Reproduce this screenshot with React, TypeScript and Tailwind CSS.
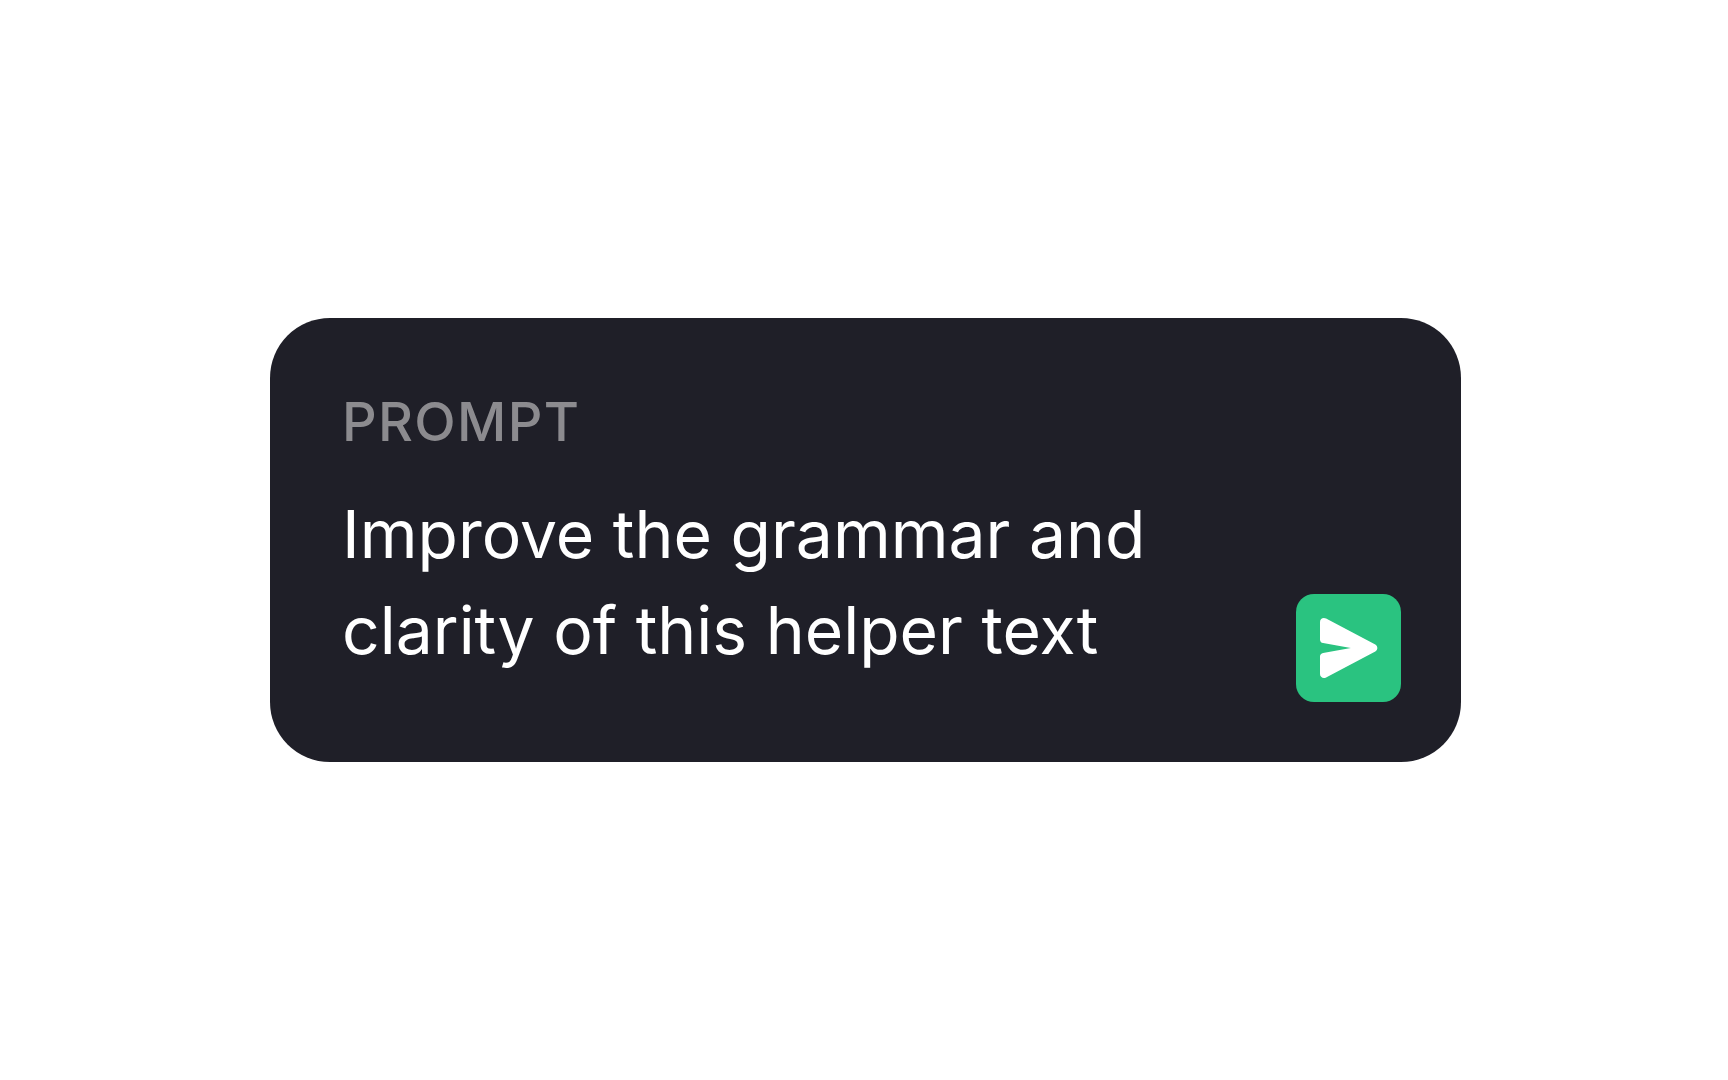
import React from 'react';

const SendIcon: React.FC = () => (
  <svg viewBox="0 0 58 60" className="w-[58px] h-[60px]" fill="currentColor" aria-hidden="true">
    <path d="M0 4C0 0.8 3.2 -0.9 6.1 0.6L55.3 26.6C58 28.1 58 31.9 55.3 33.4L6.1 59.4C3.2 60.9 0 59.2 0 56V38.6C0 36.7 1.2 35.2 3.1 34.9L30.8 30L3.1 25.1C1.2 24.8 0 23.3 0 21.4V4Z" />
  </svg>
);

const App: React.FC = () => {
  return (
    <main className="min-h-screen flex items-center pl-[270px] pr-[267px] bg-white font-['Inter',sans-serif]">
      <form className="w-full flex items-end gap-6 rounded-[60px] bg-[#1f1f28] pt-[72px] pb-[60px] pl-[72px] pr-[60px]">
        <div className="flex-1 min-w-0 flex flex-col gap-8 pb-6">
          <label
            htmlFor="prompt"
            className="text-[54px] leading-[64px] font-medium tracking-wide uppercase text-[#8c8b8f]"
          >
            Prompt
          </label>
          <textarea
            id="prompt"
            rows={2}
            defaultValue="Improve the grammar and clarity of this helper text"
            className="block w-full h-[192px] resize-none overflow-hidden bg-transparent text-[66px] leading-[96px] text-white outline-none"
          />
        </div>
        <button
          type="button"
          aria-label="Send"
          className="shrink-0 w-[105px] h-[108px] pl-6 flex items-center rounded-[18px] bg-[#2ac380] text-white"
        >
          <SendIcon />
        </button>
      </form>
    </main>
  );
};

export default App;
